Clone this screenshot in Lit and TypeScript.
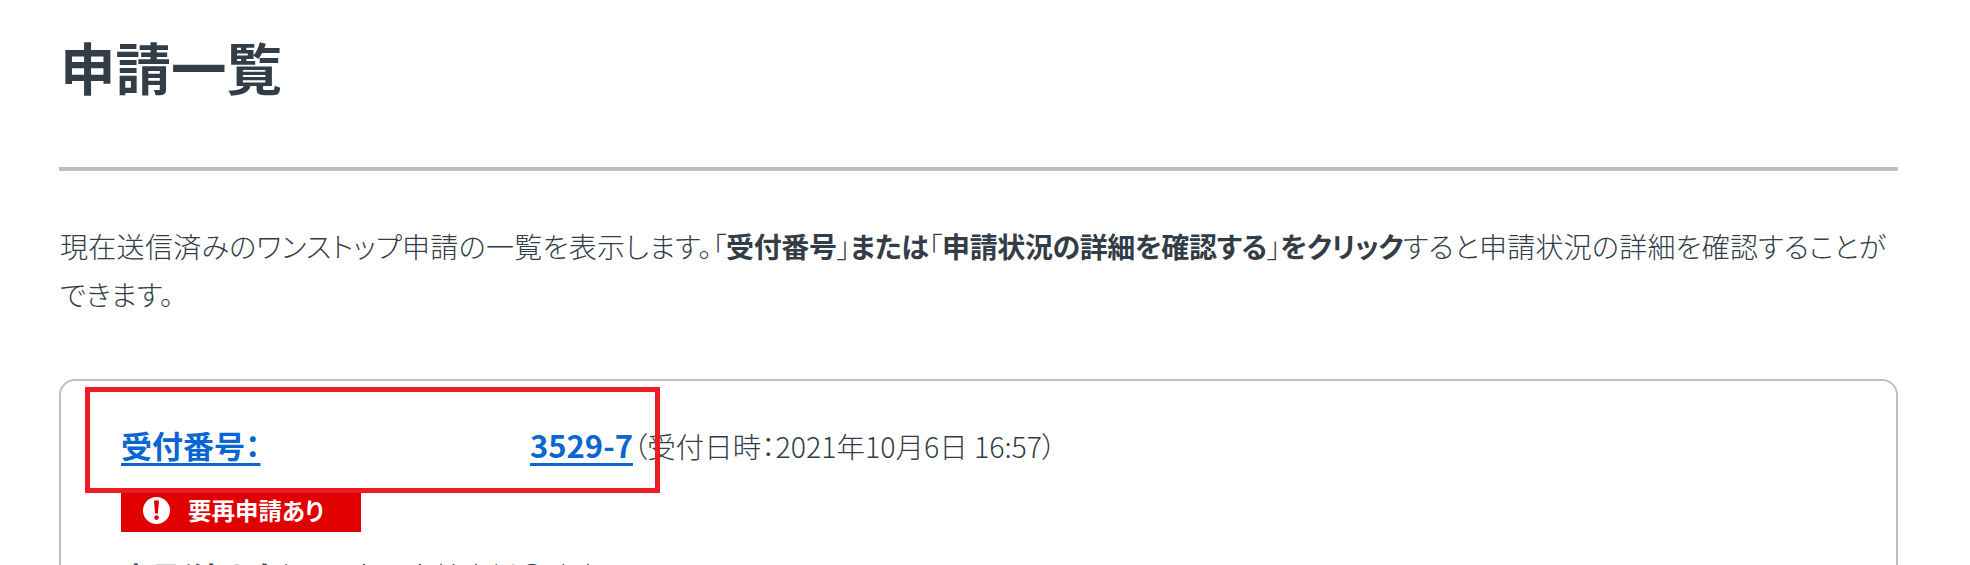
import { LitElement, html, css } from "lit";
import { customElement } from "lit/decorators.js";

@customElement("app-root")
export class AppRoot extends LitElement {
  static styles = css`
    :host {
      display: block;
      height: 565px;
      overflow: hidden;
      background: #fff;
      color: #333d47;
      font-family: "Noto Sans CJK JP", "Noto Sans", sans-serif;
      font-feature-settings: "palt";
      padding: 0 72px 0 59px;
      box-sizing: border-box;
      position: relative;
    }
    h1 {
      margin: 0;
      padding: 23px 0 0 1px;
      height: 171px;
      box-sizing: border-box;
      font-size: 55.5px;
      line-height: 86px;
      font-weight: 700;
      font-feature-settings: normal;
      border-bottom: 4px solid #bfbfbf;
    }
    .lead {
      margin: 51px 0 0;
      padding-left: 1px;
      font-size: 28px;
      line-height: 48px;
      font-weight: 300;
      letter-spacing: 0.3px;
    }
    .lead b { font-weight: 700; letter-spacing: -0.4px; }
    .lead .br { font-weight: 300; font-style: normal; }
    .lead .tail { letter-spacing: 0.25px; }
    .card {
      margin-top: 61px;
      border: 2px solid #bfbfbf;
      border-radius: 16px;
      padding: 40px 59px 40px 60px;
    }
    .head {
      font-size: 28.5px;
      line-height: 48px;
      font-weight: 300;
      white-space: nowrap;
    }
    a { color: #0a66d1; font-size: 31px; font-weight: 700; text-decoration: none; }
    .num { display: inline-block; width: 409px; }
    .u {
      text-decoration: underline;
      text-decoration-thickness: 3px;
      text-underline-offset: 5px;
    }
    .badge {
      display: flex;
      align-items: center;
      gap: 18px;
      width: 240px;
      height: 39px;
      box-sizing: border-box;
      padding: 0 0 5px 22px;
      margin-top: 23px;
      background: #e00000;
      color: #fff;
      font-size: 23.5px;
      line-height: 34px;
      font-weight: 700;
    }
    .badge svg { width: 27px; height: 27px; flex: none; }
    .row {
      display: flex;
      margin-top: 20px;
      font-size: 28px;
      line-height: 48px;
      font-weight: 300;
    }
    .row b { font-weight: 700; font-size: 30px; width: 229px; }
    .mark {
      position: absolute;
      left: 85px;
      top: 387px;
      width: 575px;
      height: 106px;
      box-sizing: border-box;
      border: 5px solid #ed1c24;
      pointer-events: none;
    }
  `;

  render() {
    return html`
      <h1>申請一覧</h1>
      <p class="lead">現在送信済みのワンストップ申請の一覧を表示します。<b><i class="br">「</i>受付番号<i class="br">」</i>または<i class="br">「</i>申請状況の詳細を確認する<i class="br">」</i>をクリック</b><span class="tail">すると申請状況の詳細を確認することができます。</span></p>
      <section class="card">
        <div class="head"><a href="#"><span class="num"><span class="u">受付番号：</span></span><span class="u">3529-7</span></a>（受付日時：2021年10月6日 16:57）</div>
        <div class="badge">
          <svg viewBox="0 0 27 27"><circle cx="13.5" cy="13.5" r="13.5" fill="#fff"/><path d="M11 3.5h5l-1.1 13h-2.8z" fill="#e00000"/><circle cx="13.5" cy="20.6" r="2.3" fill="#e00000"/></svg>
          <span>要再申請あり</span>
        </div>
        <div class="row"><b>商号(法人名)</b><span>合同会社本橋○路支</span></div>
      </section>
      <div class="mark"></div>
    `;
  }
}
